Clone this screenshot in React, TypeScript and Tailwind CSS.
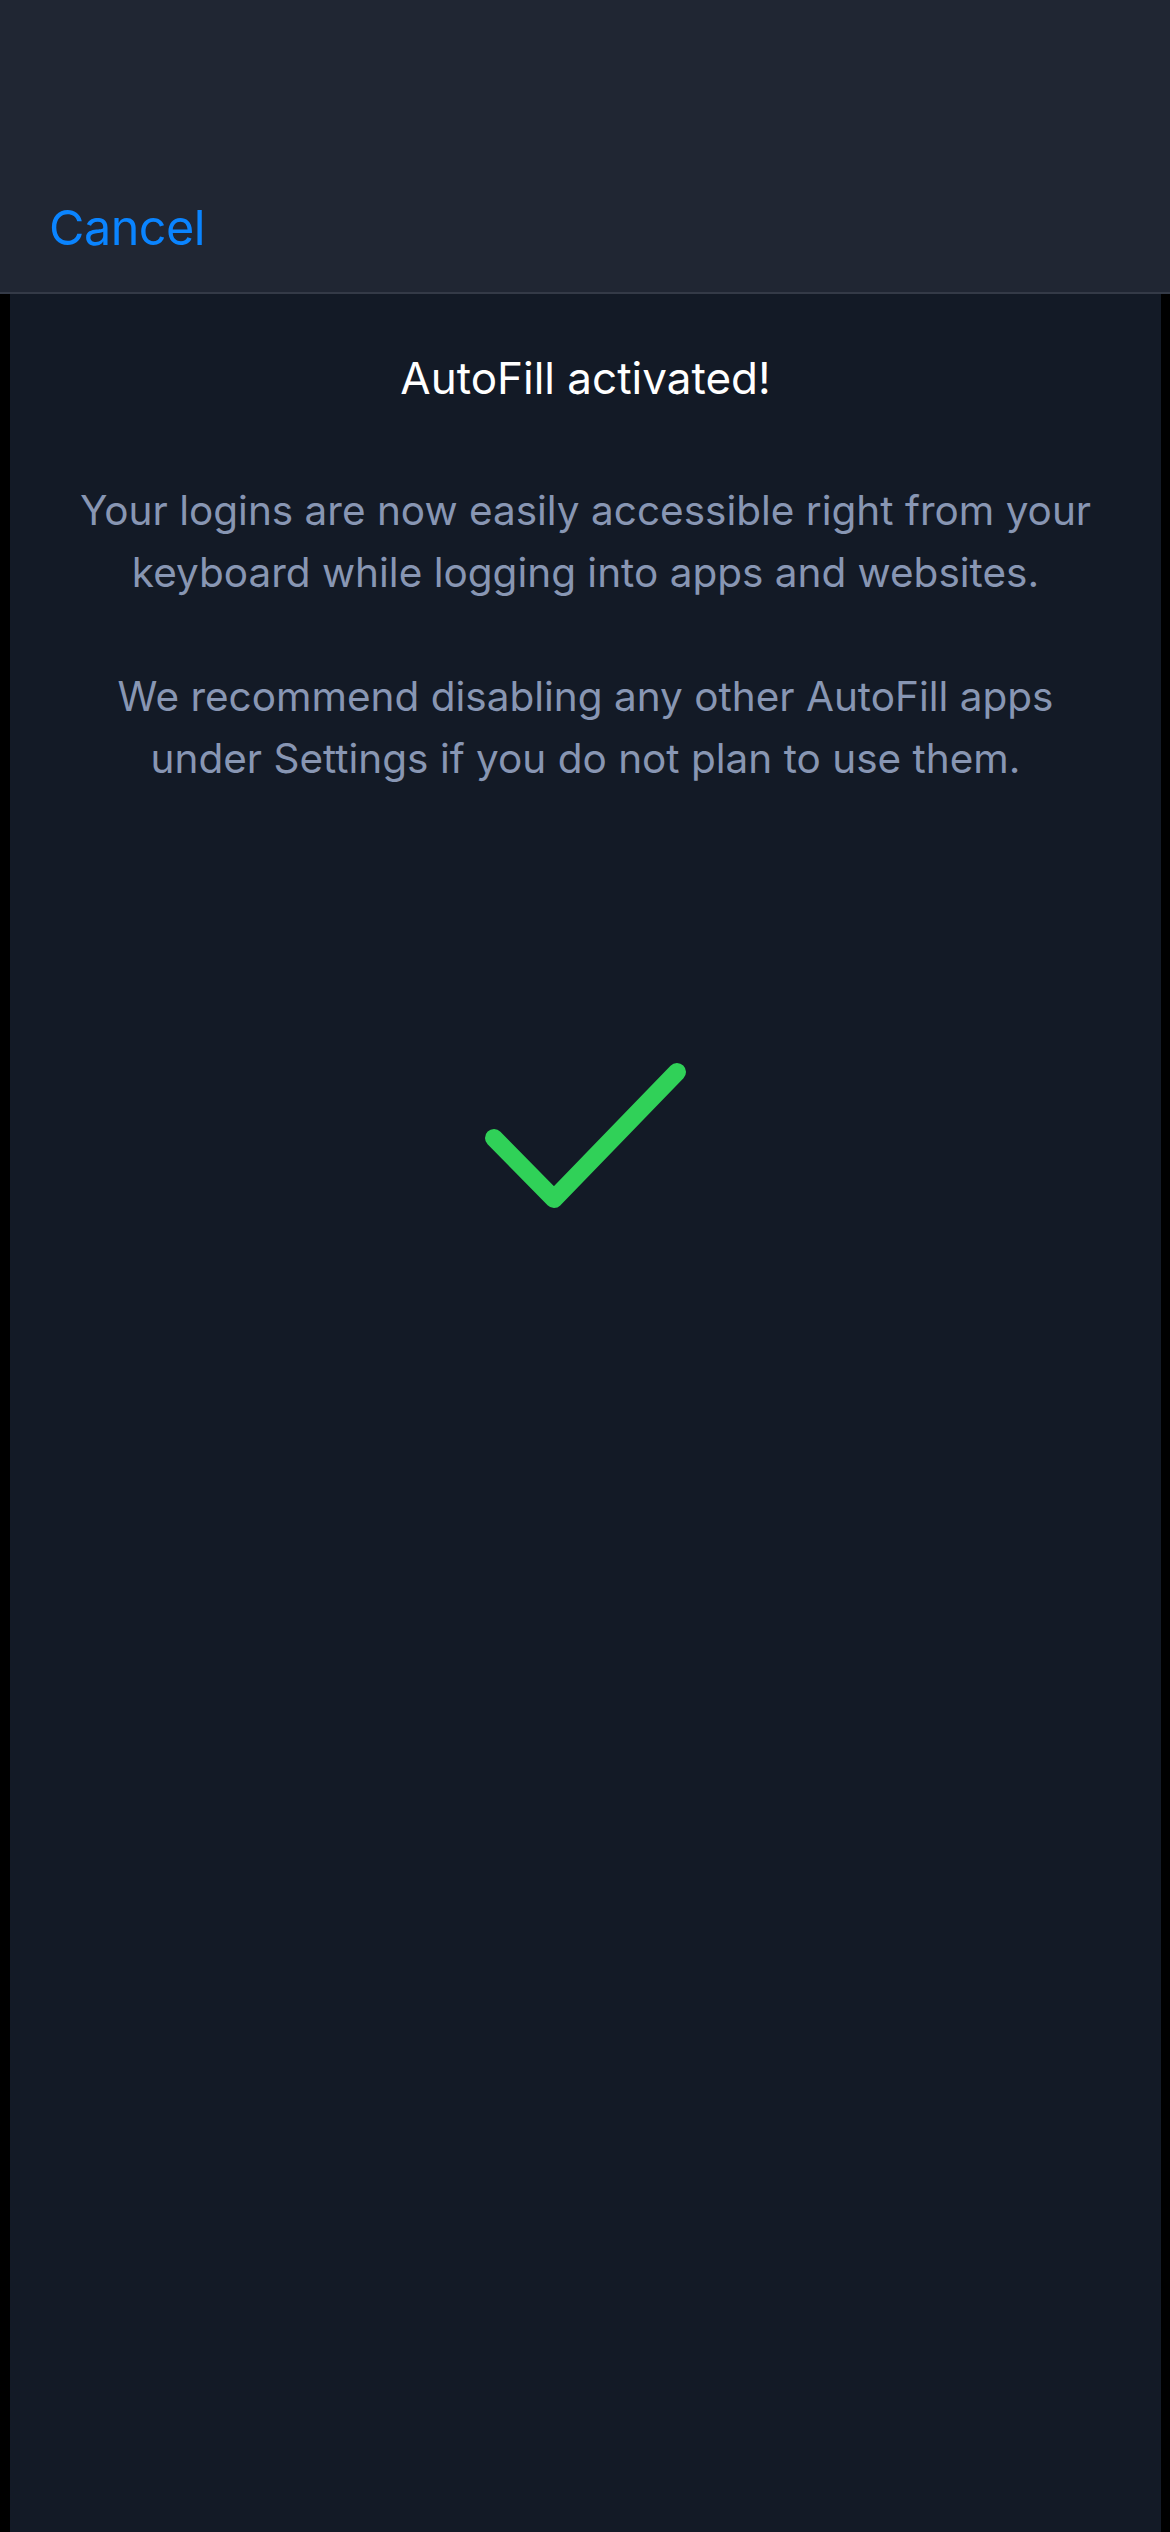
export default function App() {
  return (
    <div className="w-[1170px] min-h-[2532px] bg-black flex flex-col" style={{ fontFamily: 'Inter, "Noto Sans", sans-serif' }}>
      <div className="h-[294px] bg-[#202633] border-b-2 border-[#343a47] flex items-start pl-[49px] pt-[198px]">
        <span className="text-[48.5px] leading-[60px] text-[#0a84ff] tracking-[-0.5px]">Cancel</span>
      </div>
      <div className="flex-1 bg-[#131a26] ml-[10px] mr-[9px] flex flex-col items-center text-center pt-[56px]">
        <h1 className="text-[44px] leading-[56px] text-white font-normal">AutoFill activated!</h1>
        <p className="mt-[74px] text-[40.5px] leading-[62px] text-[#8896b3]">
          Your logins are now easily accessible right from your
          <br />
          keyboard while logging into apps and websites.
        </p>
        <p className="mt-[62px] text-[40.5px] leading-[62px] text-[#8896b3]">
          We recommend disabling any other AutoFill apps
          <br />
          under Settings if you do not plan to use them.
        </p>
        <svg className="mt-[262px]" width="223" height="168" viewBox="0 0 223 168" fill="none">
          <polyline points="20,86 80,147 203,20" stroke="#30d158" strokeWidth="18" strokeLinecap="round" strokeLinejoin="round" />
        </svg>
      </div>
    </div>
  );
}
